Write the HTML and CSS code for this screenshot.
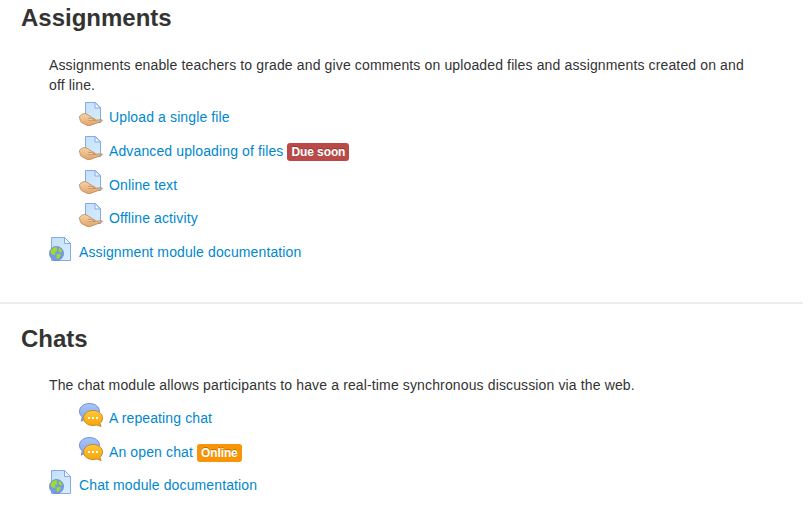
FILE: index.html
```
<!DOCTYPE html>
<html lang="en">

<head>
    <meta charset="UTF-8" />
    <title>Course</title>
    <link rel="stylesheet" href="styles.css">
</head>

<body>
    <!-- shared icons -->
    <svg class="sprite" width="0" height="0">
        <defs>
            <linearGradient id="paper" x1="0" y1="0" x2="1" y2="1">
                <stop offset="0" stop-color="#c3e0f9" />
                <stop offset="1" stop-color="#d8edfc" />
            </linearGradient>
            <linearGradient id="skin" x1="0" y1="0" x2="0" y2="1">
                <stop offset="0" stop-color="#f6d3a6" />
                <stop offset="1" stop-color="#e0a56c" />
            </linearGradient>
            <linearGradient id="blue" x1="0" y1="0" x2="0" y2="1">
                <stop offset="0" stop-color="#a9c6f7" />
                <stop offset="1" stop-color="#7ea4ec" />
            </linearGradient>
            <linearGradient id="orange" x1="0" y1="0" x2="0" y2="1">
                <stop offset="0" stop-color="#ffc93c" />
                <stop offset="1" stop-color="#f7a400" />
            </linearGradient>
        </defs>
        <symbol id="assign" viewBox="0 0 24 24">
            <path d="M6.500 .5h10l5 5v15h-15z" fill="url(#paper)" stroke="#86a9ea" />
            <path d="M16 .5v5.500h5.500z" fill="#eef7ff" stroke="#86a9ea" />
            <path d="M.3 14.800c1.700-2.300 3.700-3.600 6-3.200 2.200.5 4 2.200 6.200 3.600 1.500 1 3.500 1.300 3.800 2.300l-.3.800c2.700-.2 5-.8 7.300-.3.500.6-.5 1.100-1.300 1.500l-10 3.700c-1.500.6-2.500.7-4 .1l-5.500-2.700c-1.200-.9-1.500-3.300-2.200-5.800z" fill="url(#skin)" stroke="#b98555" stroke-width=".8" />
            <path d="M9 16.300l4 .4 3 1.600-3.500.5-3-.5" fill="#f3cc9c" stroke="#b98555" stroke-width=".7" />
        </symbol>
        <symbol id="page" viewBox="0 0 24 24">
            <path d="M2.500 .5h13l6 6v17h-19z" fill="url(#paper)" stroke="#86a9ea" />
            <path d="M15.500 .5v6h6z" fill="#eef7ff" stroke="#86a9ea" />
            <circle cx="7.500" cy="16.500" r="7" fill="#739be6" stroke="#6684c8" stroke-width=".8" />
            <path d="M1.500 14l2-2.500 3-1.500 2 .5-1 2 1 1.500-2.500 1 .5 2.500-2 .5-2.500-1.500zM10 11l2 1 1.500 3-2 .5-2-1.500zM7.500 17.500l3-.8 1.500 1.300-1.500 2.500-2 2-1-2z" fill="#a0dc28" />
        </symbol>
        <symbol id="chat" viewBox="0 0 24 24">
            <path d="M10.500 .5c5.500 0 10 3.300 10 7.700s-4.500 7.800-10 7.800l-4 0-4.200 2.200 1-4.200C1.500 12.500.5 10.500.5 8.200.5 3.800 5 .5 10.500 .5z" fill="url(#blue)" stroke="#7390d2" />
            <path d="M14 7.500c5.300 0 9.500 3.200 9.500 7.500 0 2.200-1 4-2.500 5.300l1 3.200-4-1.500-4 .5c-5.300 0-9.500-3.200-9.500-7.500s4.200-7.500 9.500-7.500z" fill="url(#orange)" stroke="#c8873a" />
            <path d="M9 14h2v2H9zM13 14h2v2h-2zM17 14h2v2h-2z" fill="#fff" />
        </symbol>
    </svg>

    <div class="section">
        <h3>Assignments</h3>
        <div class="content">
            <p>Assignments enable teachers to grade and give comments on uploaded files and assignments created on and off line.</p>
            <ul>
                <li class="indent"><svg class="icon"><use href="#assign" /></svg><a href="#">Upload a single file</a></li>
                <li class="indent"><svg class="icon"><use href="#assign" /></svg><a href="#">Advanced uploading of files</a><span class="label important">Due soon</span></li>
                <li class="indent"><svg class="icon"><use href="#assign" /></svg><a href="#">Online text</a></li>
                <li class="indent"><svg class="icon"><use href="#assign" /></svg><a href="#">Offline activity</a></li>
                <li><svg class="icon"><use href="#page" /></svg><a href="#">Assignment module documentation</a></li>
            </ul>
        </div>
    </div>

    <div class="section">
        <h3>Chats</h3>
        <div class="content">
            <p>The chat module allows participants to have a real-time synchronous discussion via the web.</p>
            <ul>
                <li class="indent"><svg class="icon"><use href="#chat" /></svg><a href="#">A repeating chat</a></li>
                <li class="indent"><svg class="icon"><use href="#chat" /></svg><a href="#">An open chat</a><span class="label warning">Online</span></li>
                <li><svg class="icon"><use href="#page" /></svg><a href="#">Chat module documentation</a></li>
            </ul>
        </div>
    </div>
</body>

</html>
```

FILE: styles.css
```
body {
    margin: 0;
    background-color: #fff;
    color: #333;
    font-family: "Liberation Sans", Arial, sans-serif;
    font-size: 14px;
    line-height: 20px;
    overflow: hidden;
}

.sprite {
    display: block;
}

.section {
    width: 803px;
    height: 304px;
    box-sizing: border-box;
    border-bottom: 2px solid #ececec;
}

.section:last-child {
    height: 214px;
    border: none;
    padding-top: 17px;
}

h3 {
    margin: 0;
    padding-left: 21px;
    font-size: 24px;
    line-height: 36px;
}

.content {
    padding: 19px 49px 0;
}

.section:last-child .content {
    padding-top: 18px;
}

p {
    margin: 0 0 5.200px;
    letter-spacing: .135px;
}

.section:last-child p {
    margin-bottom: 5.900px;
}

ul {
    margin: 0;
    padding: 0;
    list-style: none;
}

li {
    display: flex;
    align-items: center;
    height: 33.750px;
}

.indent {
    padding-left: 30px;
}

.icon {
    width: 24px;
    height: 24px;
    margin-right: 6px;
    margin-bottom: 6px;
}

a {
    color: #0088cc;
    letter-spacing: .12px;
    text-decoration: none;
}

.label {
    margin-top: 2px;
    margin-left: 4px;
    padding: 2px 4px;
    border-radius: 3px;
    color: #fff;
    font-size: 12px;
    font-weight: bold;
    letter-spacing: -.1px;
    line-height: 14px;
    text-shadow: 0 -1px 0 rgba(0, 0, 0, .25);
}

.important {
    background-color: #b94a48;
}

.warning {
    background-color: #f89406;
}
```
